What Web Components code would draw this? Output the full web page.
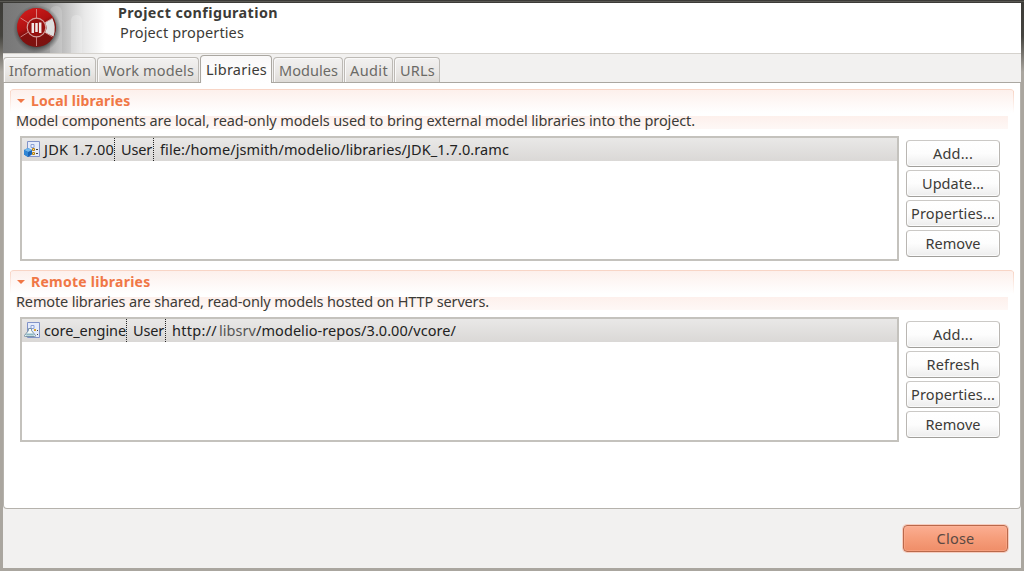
<!DOCTYPE html>
<html lang="en"><head><meta charset="utf-8"><title>Project configuration</title>
<style>
html,body{margin:0;height:100%;overflow:hidden}
body{font:14.5px/18px "Noto Sans","Open Sans",sans-serif;color:#3c3b37}
</style></head><body>
<project-dialog></project-dialog>
<script>
const define=(name,html,init)=>customElements.define(name,class extends HTMLElement{
  connectedCallback(){
    if(this.shadowRoot)return;
    const t=document.createElement('template');t.innerHTML=html;
    this.attachShadow({mode:'open'}).append(t.content.cloneNode(true));
    if(init)init(this,this.shadowRoot);
  }
});

/* A single line of text, tracked to fill the width given in "w". */
define('ui-text',`<style>:host{display:block;white-space:pre;height:20px;flex:none}span{display:inline-block}</style><span><slot></slot></span>`,(el,r)=>{
  const w=+el.getAttribute('w'),s=r.querySelector('span');
  el.style.width=w+'px';
  s.style.letterSpacing=((w-s.getBoundingClientRect().width)/el.textContent.length)+'px';
});

define('modelio-logo',`<style>:host{display:block;width:116px;height:50px;flex:none}svg{display:block}</style>
<svg width="116" height="50" viewBox="3 3 116 50">
<defs><linearGradient id="bg"><stop offset="0" stop-color="#777"/><stop offset=".3" stop-color="#828282"/><stop offset=".58" stop-color="#bcbcbc"/><stop offset=".8" stop-color="#e9e9e9"/><stop offset="1" stop-color="#fff"/></linearGradient>
<linearGradient id="rd" x1="0" y1="0" x2=".5" y2="1"><stop offset="0" stop-color="#d81e1e"/><stop offset=".5" stop-color="#b01212"/><stop offset=".62" stop-color="#84100e"/><stop offset="1" stop-color="#7c1210"/></linearGradient>
<radialGradient id="sh"><stop offset=".7" stop-color="#222" stop-opacity=".75"/><stop offset="1" stop-color="#444" stop-opacity="0"/></radialGradient></defs>
<rect x="3" y="3" width="102" height="50" fill="url(#bg)"/>
<path d="M50 53V13q0-7 6-7t6 7v40z" fill="#fff" opacity=".17"/><path d="M71 53V21q0-6 5.500-6t5.500 6v32z" fill="#fff" opacity=".22"/>
<circle cx="37" cy="29" r="24" fill="url(#sh)"/>
<circle cx="36.500" cy="27.500" r="19.500" fill="url(#rd)"/>
<path d="M45 22.500L52.500 18.500Q56.500 27 53.500 36.500L45 32.500Q48 27.500 45 22.500z" fill="#dedede"/>
<g stroke="#d99" stroke-width="1" opacity=".8"><path d="M36.500 9v10M36.500 36v10M28.500 23l-8-5M28.500 32l-8 5M44.500 23l8-5M44.500 32l8 5"/></g>
<circle cx="36.500" cy="27.500" r="9.300" fill="#96100f" stroke="#d2a09c" stroke-width="1.200"/>
<path d="M32.800 23v10M36.500 23v9M40.200 22.500v10.500" stroke="#f2e9e7" stroke-width="2.500"/>
</svg>`);

define('dialog-header',`<style>:host{display:flex;height:50px;background:#fff;border-bottom:1px solid #d5d2cd;overflow:hidden}
.b{font-weight:700;font-size:14.3px;line-height:20px;margin-left:-1px}.t{display:flex;flex-direction:column}.s{margin-left:1px;}</style>
<modelio-logo></modelio-logo><div class="t"><ui-text class="b" w="160">Project configuration</ui-text><ui-text class="s" w="124">Project properties</ui-text></div>`);

define('ui-tab',`<style>:host{display:block;box-sizing:border-box;height:25px;border:1px solid #bdbab5;border-bottom:0;border-radius:4px 4px 0 0;background:linear-gradient(#f2f1f0,#e9e7e5 60%,#dedbd7);box-shadow:inset 1px 1px #faf9f9;padding:3px 4px 0;color:#6b6a66;flex:none}
:host([active]){height:28px;margin-bottom:-1px;background:linear-gradient(#f9f8f8,#fff);border-color:#aaa7a1;padding:4px 5px 0;color:#3c3b37}</style><slot></slot>`);

define('tab-bar',`<style>:host{display:flex;align-items:flex-end;box-sizing:border-box;height:29px;gap:1px;background:#f2f1f0;border-bottom:1px solid #aaa7a1}
ui-tab{width:var(--w)}</style>
<ui-tab style="--w:93px;padding-left:5px"><ui-text w="82">Information</ui-text></ui-tab>
<ui-tab style="--w:102px;padding-left:5px"><ui-text w="91">Work models</ui-text></ui-tab>
<ui-tab active style="--w:72px"><ui-text w="61">Libraries</ui-text></ui-tab>
<ui-tab style="--w:70px;padding-left:5px"><ui-text w="59">Modules</ui-text></ui-tab>
<ui-tab style="--w:49px;padding-left:5px"><ui-text w="38">Audit</ui-text></ui-tab>
<ui-tab style="--w:46px;padding-left:5px"><ui-text w="35">URLs</ui-text></ui-tab>`);

define('ui-button',`<style>:host{display:flex;justify-content:center;box-sizing:border-box;width:94px;height:27px;border:1px solid #b9b6b2;border-top-color:#cbc9c6;border-bottom-color:#a19f9b;border-radius:4px;background:linear-gradient(#fff,#fdfdfd 50%,#ededed);box-shadow:inset 0 0 0 1px #fffb;padding-top:3px}
:host([primary]){width:105px;border-color:#b9694b;background:linear-gradient(#fbae92,#f69d7a 50%,#ef8d68);box-shadow:inset 0 0 0 1px #ffb99e66,0 0 0 1px #f7cdbf;color:#5b4943}</style><slot></slot>`);

const page='<path d="M3.500 .5h12v15h-12z" fill="#e4ebfa" stroke="#8193c8"/><path d="M7 3.500h3v3H7z" fill="#edf2ff" stroke="#8aa0d5"/>';
define('model-icon',`<style>:host{display:block;width:17px;height:16px;flex:none}svg{display:block}</style><svg width="17" height="16"></svg>`,(el,r)=>{
  r.querySelector('svg').innerHTML=page+(el.getAttribute('kind')==='local'
  ?'<path d="M8.500 7.500h2v2h-2zM8.500 11.500h2v2h-2z" fill="#f9dc8f" stroke="#b98312"/><path d="M12 8.500h2M12 12.500h2" stroke="#444"/><path d="M0 9l4-2 4 2v4.500L4 16l-4-2.500z" fill="#1763b5"/><path d="M0 9l4-2 4 2-4 2z" fill="#74b9ed"/><path d="M0 9l4 2v5l-4-2.500z" fill="#2f86d5"/>'
  :'<path d="M10 8h2" stroke="#dca32c" stroke-width="2"/><path d="M13 8.500h1M13 12.500h1" stroke="#444"/><path d="M4.500 6.500h3v2l4 5q.5 1-1 1H1.500q-1.500 0-1-1l4-5z" fill="#f3fafa" stroke="#7993a5"/><path d="M3 11.500h6l1.500 2h-9z" fill="#8cb7c3"/>');
});

define('library-table',`<style>:host{display:block;box-sizing:border-box;width:879px;height:125px;border:2px solid #c4c2bd;background:#fff;flex:none}
.r{display:flex;height:23px;background:linear-gradient(#e9e8e7,#dad8d6);color:#222;align-items:center}
::slotted(model-icon){margin:0 3px 2px 2px}::slotted(.sep){height:23px;border-left:1px dotted #222;box-sizing:border-box;width:1px}</style><div class="r"><slot></slot></div>`);

define('library-section',`<style>:host{display:block;height:172px;width:1004px;box-sizing:border-box}
.h{height:27px;box-sizing:border-box;border-top:1px solid #f8d5c6;border-radius:4px;background:linear-gradient(#fdf0ec,#fff 23px);display:flex;position:relative;padding:1px 0 0 7px;color:#f07746;font-weight:700;font-size:14px;line-height:20px}
.h:before,.h:after{content:"";position:absolute;top:1px;width:1px;height:22px;background:linear-gradient(#f8d5c6,#fff)}.h:before{left:0}.h:after{right:0}
svg{width:9px;height:6px;margin:7px 5px 0 0}
.d{height:13px;margin:0 6px;background:linear-gradient(#fdf0ec,#fef8f6);}
.d ::slotted(ui-text){position:relative;top:-5px}
.c{display:flex;margin:7px 0 0 10px;gap:7px}
.b{display:flex;flex-direction:column;gap:3px;padding-top:4px}</style>
<div class="h"><svg><path d="M0 1h8L4 5z" fill="#f07746"/></svg><slot name="title"></slot></div>
<div class="d"><slot name="note"></slot></div><div class="c"><slot name="table"></slot><div class="b"><slot></slot></div></div>`);

define('project-dialog',`<style>
:host{display:flex;flex-direction:column;box-sizing:border-box;width:1024px;height:571px;padding:3px;background:linear-gradient(#3c3b37 0 1px,#5a5954 1px 2px,#3c3b37 2px,#45443f 36px,#aaa69f 72px,#aaa69f)}
main{box-sizing:border-box;height:426px;background:#fff;border:1px solid #b5b2ac;border-top:0;border-radius:0 0 4px 4px;padding:6px 0 0 6px;display:flex;flex-direction:column;gap:9px}
.in{background:#f2f1f0;flex:1;display:flex;flex-direction:column}
footer{display:flex;justify-content:flex-end;padding:16px 13px 0 0}</style>
<dialog-header></dialog-header><div class="in"><tab-bar></tab-bar><main>
<library-section><ui-text slot="title" w="99.5">Local libraries</ui-text><ui-text slot="note" w="679">Model components are local, read-only models used to bring external model libraries into the project.</ui-text>
<library-table slot="table"><model-icon kind="local"></model-icon><ui-text w="70">JDK 1.7.00</ui-text><i class="sep"></i><ui-text w="31" style="margin:0 1px 0 6px">User</ui-text><i class="sep"></i><ui-text w="349" style="margin-left:6px">file:/home/jsmith/modelio/libraries/JDK_1.7.0.ramc</ui-text></library-table>
<ui-button><ui-text w="40">Add...</ui-text></ui-button><ui-button><ui-text w="62">Update...</ui-text></ui-button><ui-button><ui-text w="84">Properties...</ui-text></ui-button><ui-button><ui-text w="55">Remove</ui-text></ui-button></library-section>
<library-section><ui-text slot="title" w="119.5">Remote libraries</ui-text><ui-text slot="note" w="473">Remote libraries are shared, read-only models hosted on HTTP servers.</ui-text>
<library-table slot="table"><model-icon kind="remote"></model-icon><ui-text w="82">core_engine</ui-text><i class="sep"></i><ui-text w="31" style="margin:0 1px 0 6px">User</ui-text><i class="sep"></i><ui-text w="45" style="margin:0 2px 0 6px">http://</ui-text><ui-text w="37" style="color:#555">libsrv</ui-text><ui-text w="200">/modelio-repos/3.0.00/vcore/</ui-text></library-table>
<ui-button><ui-text w="40">Add...</ui-text></ui-button><ui-button><ui-text w="53">Refresh</ui-text></ui-button><ui-button><ui-text w="84">Properties...</ui-text></ui-button><ui-button><ui-text w="55">Remove</ui-text></ui-button></library-section>
</main><footer><ui-button primary><ui-text w="38">Close</ui-text></ui-button></footer></div>`);
</script></body></html>
